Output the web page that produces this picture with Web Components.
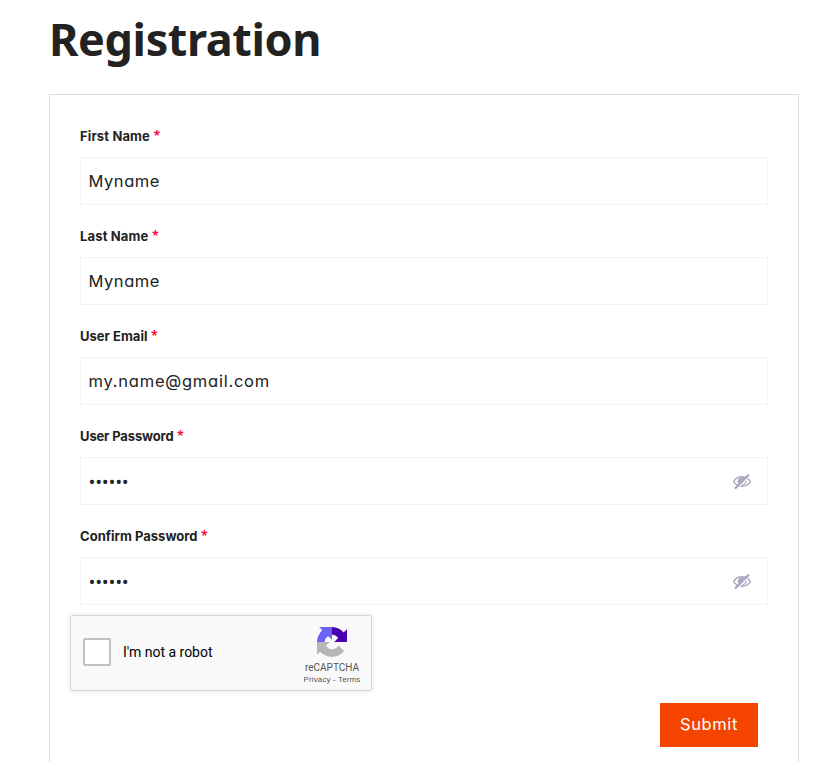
<!DOCTYPE html>
<html lang="en">
<head>
<meta charset="utf-8">
<title>Registration</title>
<style>
html,body{margin:0;height:100%;overflow:hidden;background:#fff}
</style>
</head>
<body>
<registration-page></registration-page>
<script>
// Text line whose tracking is adjusted so that it fills the given width.
class FitText extends HTMLElement {
  connectedCallback() {
    const root = this.attachShadow({mode: 'open'});
    root.innerHTML = `<style>:host{display:inline-block;white-space:pre}span{display:inline-block}</style><span></span>`;
    const s = root.querySelector('span');
    s.textContent = this.getAttribute('text');
    const w = parseFloat(this.getAttribute('width'));
    const n = s.textContent.length;
    const natural = s.getBoundingClientRect().width;
    s.style.letterSpacing = ((w - natural) / n) + 'px';
  }
}
customElements.define('fit-text', FitText);

class EyeSlash extends HTMLElement {
  connectedCallback() {
    this.attachShadow({mode: 'open'}).innerHTML = `
<style>:host{display:block;width:20px;height:18px}svg{display:block}</style>
<svg width="20" height="18" viewBox="0 0 20 18" fill="none" stroke="#a9a7bf">
<path d="M1.700 9.500C3.500 6.200 6.300 4.700 10 4.700S16.500 6.200 18.300 9.500C16.500 12.800 13.700 14.300 10 14.300S3.500 12.800 1.700 9.500Z" stroke-width="1.500"/>
<path d="M10 5.200a4.300 4.300 0 0 0-3.600 6.700L12.500 5.900A4.300 4.300 0 0 0 10 5.200Z" fill="#a9a7bf" stroke="none"/>
<path d="M14 8.500a4.100 4.100 0 0 1-4 4.600" stroke-width="1.200"/>
<path d="M4.900 17L17.700 4" stroke="#fff" stroke-width="1"/>
<path d="M3.600 16L16.300 3.200" stroke-width="2.300" stroke-linecap="round"/>
</svg>`;
  }
}
customElements.define('eye-slash', EyeSlash);

class FormField extends HTMLElement {
  connectedCallback() {
    const a = n => this.getAttribute(n);
    this.attachShadow({mode: 'open'}).innerHTML = `
<style>
:host{display:block;height:100px;color:#222}
.label{height:20px;font:700 13px/20px Inter,sans-serif;display:flex;margin-bottom:11px}
.star{color:#ff0a3a;margin-left:3.500px;font:700 12.500px/19px "Open Sans",sans-serif}
.box{box-sizing:border-box;height:48px;border:1px solid #f4f4f6;padding:0 15px 0 7.500px;display:flex;align-items:center;justify-content:space-between;font:400 16.500px/24px Inter,sans-serif;font-feature-settings:"cv11"}
.dots{font:400 18.500px/24px "Open Sans",sans-serif;padding-top:1px}
</style>
<div class="label"><fit-text text="${a('label')}" width="${a('lw')}"></fit-text><span class="star">*</span></div>
<div class="box"><fit-text class="${this.hasAttribute('secret') ? 'dots' : ''}" text="${a('value')}" width="${a('vw')}"></fit-text>${this.hasAttribute('secret') ? '<eye-slash></eye-slash>' : ''}</div>`;
  }
}
customElements.define('form-field', FormField);

class CaptchaBox extends HTMLElement {
  connectedCallback() {
    this.attachShadow({mode: 'open'}).innerHTML = `
<style>
:host{box-sizing:border-box;display:flex;width:302px;height:76px;border:1px solid #d3d3d3;border-radius:3px;background:#f9f9f9;box-shadow:0 0 4px 1px rgba(0,0,0,.08);font-family:Roboto,sans-serif;color:#000}
.check{box-sizing:border-box;width:28px;height:28px;border:2px solid #c1c1c1;border-radius:2px;background:#fff;margin:22px 12px 0 12px}
.text{font-size:14px;line-height:17px;margin-top:28px;flex:1}
.brand{width:70px;margin-right:4px;display:flex;flex-direction:column;align-items:center;color:#555}
svg{display:block;margin-top:11px}
.name{font-size:10px;line-height:12px;margin-top:5px}
.links{font:8px/10px "Liberation Sans",sans-serif;margin-top:1px}
</style>
<div class="check"></div>
<div class="text"><fit-text text="I'm not a robot" width="89.500"></fit-text></div>
<div class="brand">
<svg width="30" height="30" viewBox="0 0 64 64">
<path d="M64 31.955l-.033-1.370V4.687l-7.160 7.160C50.948 4.674 42.033.093 32.050.093c-10.400 0-19.622 4.960-25.458 12.640l11.736 11.860a15.550 15.550 0 0 1 4.754-5.334c2.050-1.600 4.952-2.906 8.968-2.906.485 0 .860.057 1.135.163 4.976.393 9.288 3.140 11.828 7.124l-8.307 8.307L64 31.953" fill="#4a00ae"/>
<path d="M31.862.094l-1.370.033H4.594l7.160 7.160C4.580 13.147 0 22.060 0 32.046c0 10.400 4.960 19.622 12.640 25.458L24.500 45.768a15.550 15.550 0 0 1-5.334-4.754c-1.600-2.050-2.906-4.952-2.906-8.968 0-.485.057-.860.163-1.135.393-4.976 3.140-9.288 7.124-11.828l8.307 8.307L31.860.095" fill="#6c63f5"/>
<path d="M.001 32.045l.033 1.370v25.898l7.160-7.160c5.860 7.173 14.774 11.754 24.760 11.754 10.400 0 19.622-4.960 25.458-12.640l-11.736-11.860a15.550 15.550 0 0 1-4.754 5.334c-2.050 1.600-4.952 2.906-8.968 2.906-.485 0-.860-.057-1.135-.163-4.976-.393-9.288-3.140-11.828-7.124l8.307-8.307c-10.522.040-22.400.066-27.295-.005" fill="#b7b7b7"/>
</svg>
<div class="name"><fit-text text="reCAPTCHA" width="54"></fit-text></div>
<div class="links"><fit-text text="Privacy - Terms" width="57"></fit-text></div>
</div>`;
  }
}
customElements.define('captcha-box', CaptchaBox);

class SubmitButton extends HTMLElement {
  connectedCallback() {
    this.attachShadow({mode: 'open'}).innerHTML = `
<style>:host{box-sizing:border-box;display:flex;align-items:center;justify-content:center;width:98px;height:44px;padding-bottom:2px;background:#f44400;color:#fff;font:400 16.500px/24px Inter,sans-serif}</style>
<fit-text text="Submit" width="58"></fit-text>`;
  }
}
customElements.define('submit-button', SubmitButton);

class RegistrationPage extends HTMLElement {
  connectedCallback() {
    this.attachShadow({mode: 'open'}).innerHTML = `
<style>
:host{display:flex;flex-direction:column;box-sizing:border-box;height:762px;width:817px;padding:9px 18px 0 49px;overflow:hidden}
h1{margin:0 0 25px;height:60px;font:700 45px/60px "Noto Sans",sans-serif;color:#222}
.card{flex:none;box-sizing:border-box;height:720px;border:1px solid #dddbe8;padding:31px 30px 0}
captcha-box{margin:-11px 0 0 -10px}
submit-button{margin:12px 10px 0 auto}
</style>
<h1><fit-text text="Registration" width="272"></fit-text></h1>
<div class="card">
<form-field label="First Name" lw="70" value="Myname" vw="71.500"></form-field>
<form-field label="Last Name" lw="68.500" value="Myname" vw="71.500"></form-field>
<form-field label="User Email" lw="67.500" value="my.name@gmail.com" vw="181.500"></form-field>
<form-field label="User Password" lw="93.500" value="••••••" vw="40" secret></form-field>
<form-field label="Confirm Password" lw="117.500" value="••••••" vw="40" secret></form-field>
<captcha-box></captcha-box>
<submit-button></submit-button>
</div>`;
  }
}
customElements.define('registration-page', RegistrationPage);
</script>
</body>
</html>
